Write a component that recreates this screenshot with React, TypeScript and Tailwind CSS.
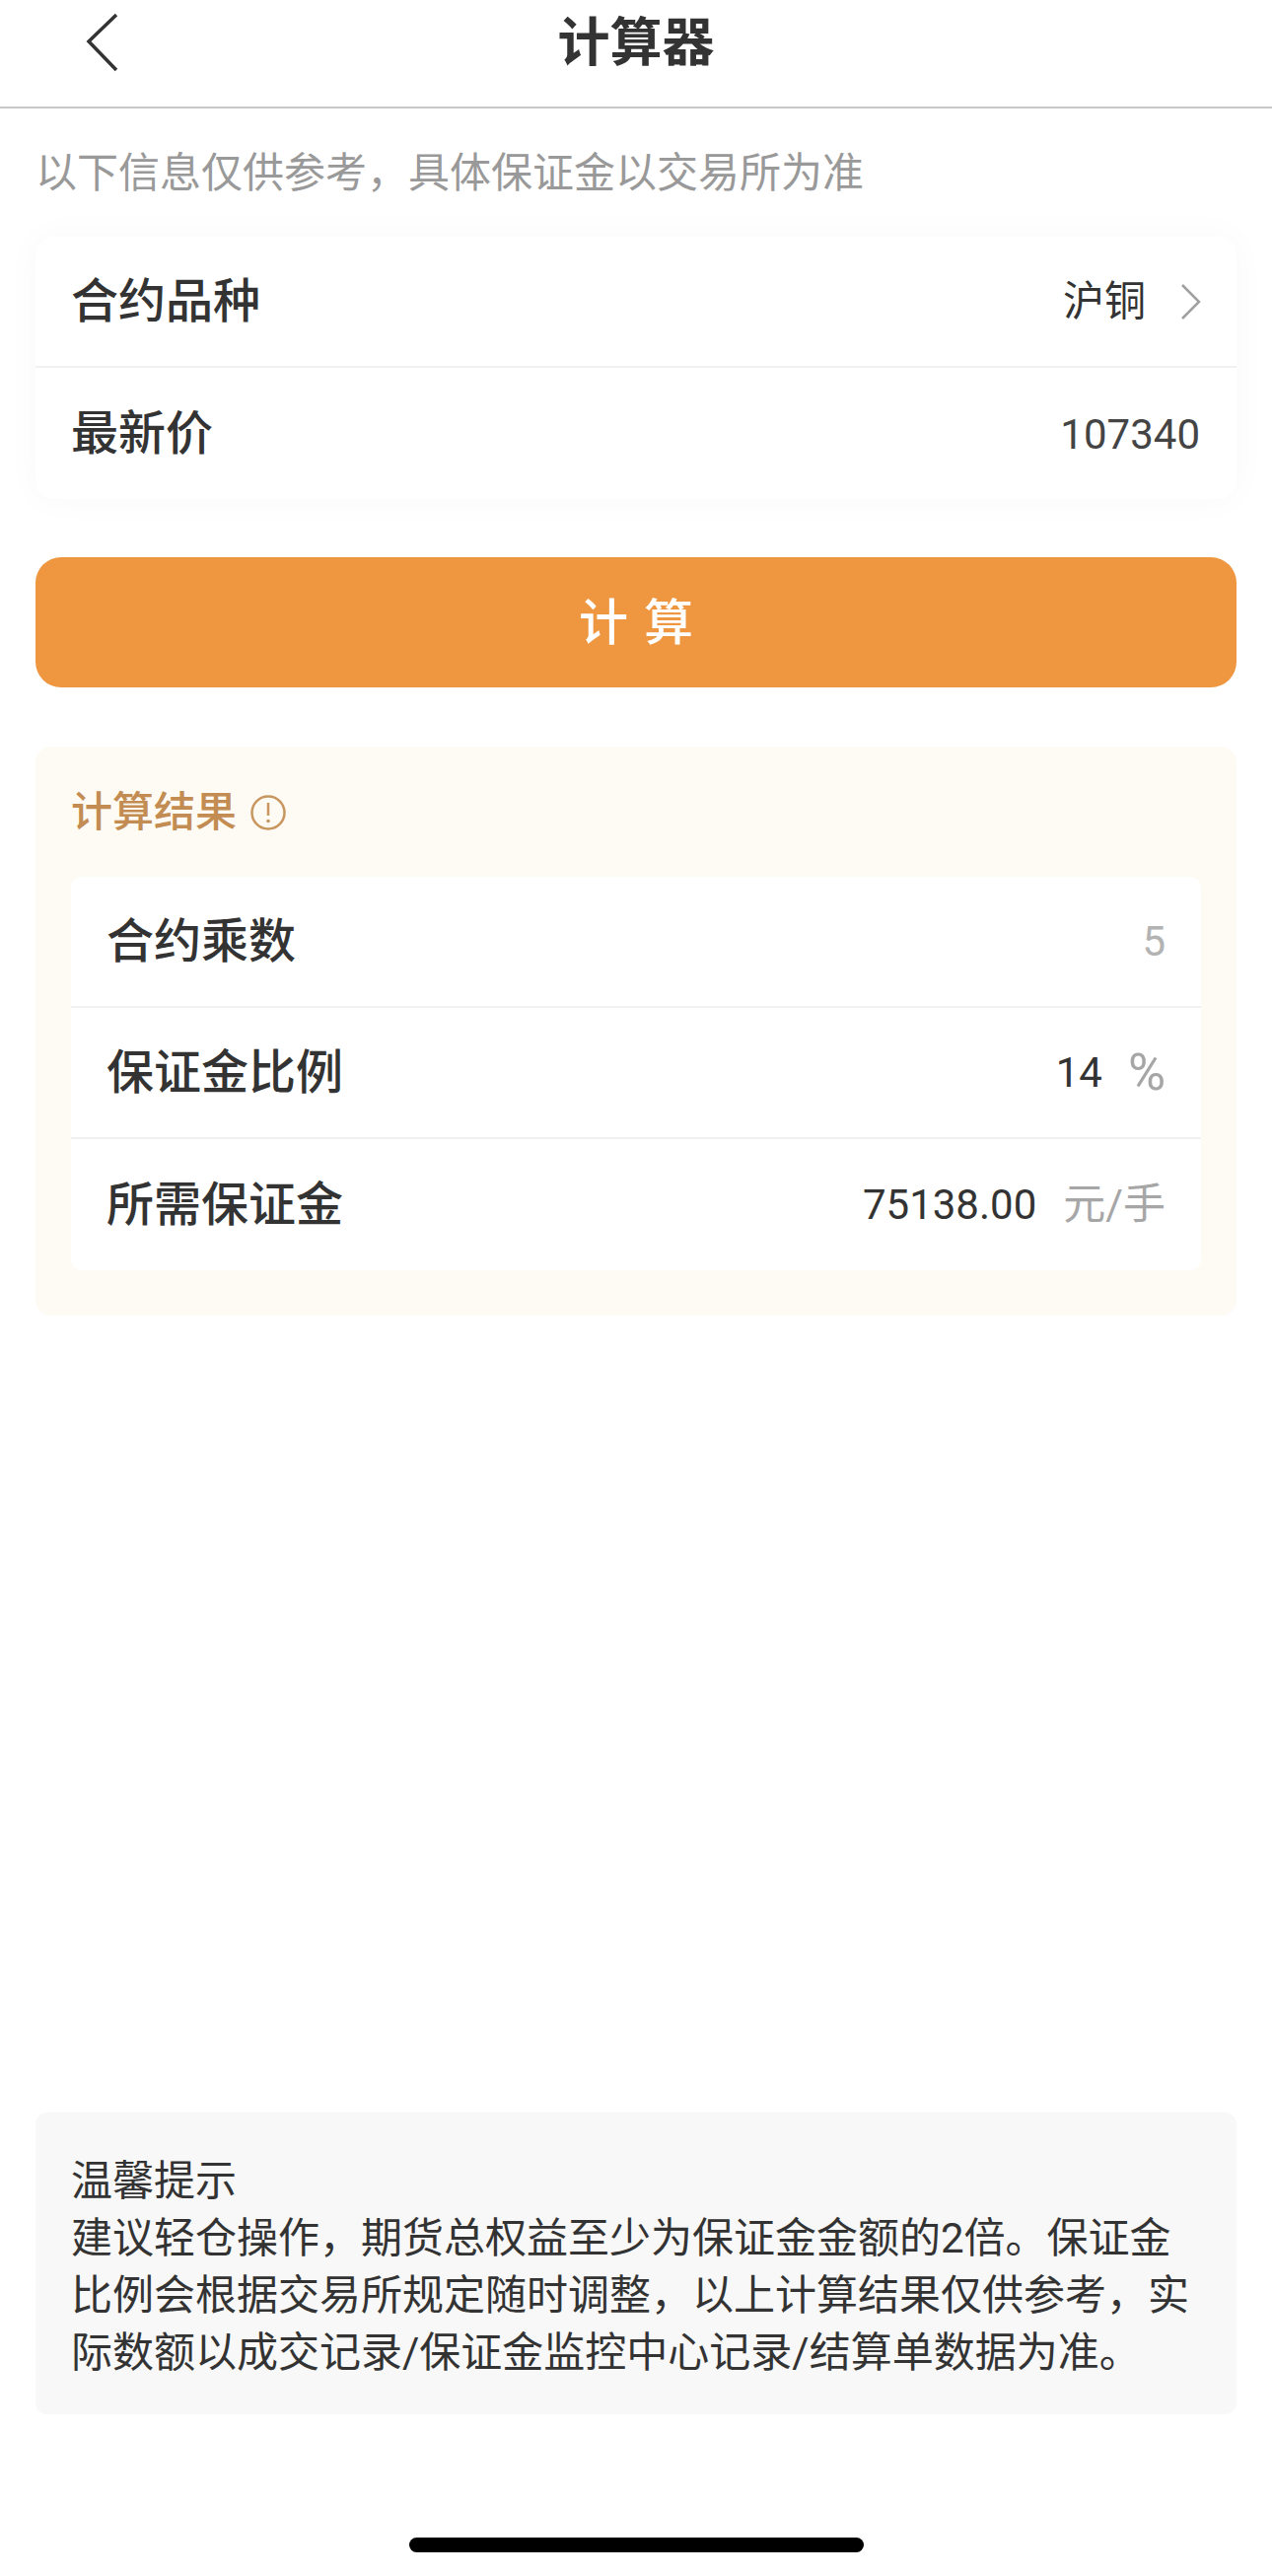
import React from "react";

const font = { fontFamily: '"Roboto", "Noto Sans CJK SC", sans-serif' };

function Row({ label, children, divider }: { label: string; children: React.ReactNode; divider?: boolean }) {
  return (
    <div className={`flex h-[133px] items-center justify-between px-9 ${divider ? "border-b-2 border-[#f1f1f1]" : ""}`}>
      <span className="pt-[1px] text-[48px] font-medium leading-none text-[#333333]">{label}</span>
      <div className="flex items-center text-[42px] leading-none text-[#333333]">{children}</div>
    </div>
  );
}

export default function App() {
  return (
    <div style={font} className="flex h-[2612px] w-[1290px] flex-col overflow-hidden bg-white">
      <header className="relative flex h-[110px] items-start justify-center border-b-2 border-[#c8c8c8] pt-[13px]">
        <svg className="absolute left-[84px] top-[12px]" width="40" height="62" viewBox="0 0 40 62" fill="none">
          <path d="M34 3 L6 30 L34 59" stroke="#333333" strokeWidth="3.5" />
        </svg>
        <h1 className="text-[53px] font-bold leading-[62px] text-[#333333]">计算器</h1>
      </header>

      <p className="mt-[40px] px-9 text-[42px] leading-[52px] text-[#999999]">
        以下信息仅供参考，具体保证金以交易所为准
      </p>

      <section className="mx-9 mt-[38px] rounded-[20px] bg-white shadow-[0_0_36px_rgba(0,0,0,0.03)]">
        <Row label="合约品种" divider>
          <span>沪铜</span>
          <svg className="ml-[35px] mr-[-1px]" width="22" height="38" viewBox="0 0 22 38" fill="none">
            <path d="M2 2 L19 19 L2 36" stroke="#a0a0a0" strokeWidth="2.5" />
          </svg>
        </Row>
        <Row label="最新价">
          <span className="mr-[1px] pt-[2px] text-[#444444]">107340</span>
        </Row>
      </section>

      <button className="mx-9 mt-[59px] flex h-[132px] items-center justify-center rounded-[26px] bg-[#ee9640] pl-[16px] pt-[3px] text-[50px] font-medium tracking-[16px] text-white">
        计算
      </button>

      <section className="mx-9 mt-[60px] rounded-[16px] bg-[#fefaf4] px-9 pb-[46px]">
        <div className="flex h-[132px] items-center pt-[2px] text-[#c28c52]">
          <span className="text-[42px] font-medium leading-none">计算结果</span>
          <svg className="ml-[13px]" width="38" height="38" viewBox="0 0 38 38" fill="none">
            <circle cx="19" cy="19" r="16.5" stroke="#c8965f" strokeWidth="2.5" />
            <path d="M19 9 V22" stroke="#c8965f" strokeWidth="2.5" />
            <circle cx="19" cy="27.5" r="1.8" fill="#c8965f" />
          </svg>
        </div>
        <div className="rounded-[10px] bg-white">
          <Row label="合约乘数" divider>
            <span className="text-[#b3b3b3]">5</span>
          </Row>
          <Row label="保证金比例" divider>
            <span>14</span>
            <span className="ml-[26px] text-[52px] text-[#a6a6a6]">%</span>
          </Row>
          <Row label="所需保证金">
            <span className="mr-[1px]">75138.00</span>
            <span className="ml-[26px] text-[43px] text-[#a6a6a6]">元/手</span>
          </Row>
        </div>
      </section>

      <section className="mx-9 mt-auto rounded-[12px] bg-[#f8f8f8] px-9 pb-[33px] pt-[41px] text-[42px] leading-[58px] text-[#333333]">
        <p>温馨提示</p>
        <p>
          建议轻仓操作，期货总权益至少为保证金金额的2倍。保证金比例会根据交易所规定随时调整，以上计算结果仅供参考，实际数额以成交记录/保证金监控中心记录/结算单数据为准。
        </p>
      </section>

      <div className="mb-[24px] mt-[125px] flex justify-center">
        <div className="h-[15px] w-[461px] rounded-full bg-black" />
      </div>
    </div>
  );
}
